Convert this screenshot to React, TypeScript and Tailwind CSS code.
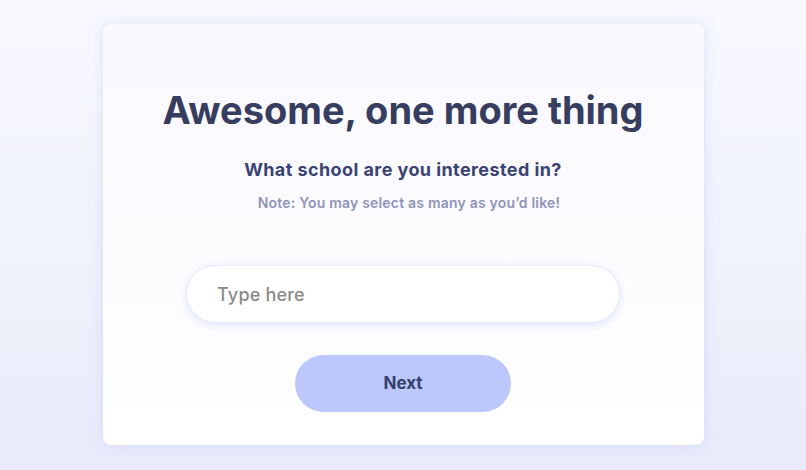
export default function App() {
  return (
    <div className="min-h-[470px] w-full bg-gradient-to-b from-[#f8f9fe] to-[#e9ebfa] pt-6 font-['Inter',sans-serif]">
      <div className="mx-auto flex h-[421px] w-[601px] flex-col items-center rounded-lg bg-gradient-to-b from-[#f8f8fe] to-white shadow-[0_0_14px_rgba(170,180,245,0.35)]">
        <h1 className="mt-[62px] text-[38px] font-bold leading-[48px] text-[#363d5f]">
          Awesome, one more thing
        </h1>
        <h2 className="mt-[24px] text-[18px] font-bold leading-6 tracking-[0.42px] text-[#3a4373]">
          What school are you interested in?
        </h2>
        <p className="mt-[11px] pl-[12px] text-[14px] font-semibold leading-5 tracking-[0.2px] text-[#8f94b8]">
          Note: You may select as many as you’d like!
        </p>
        <input
          type="text"
          placeholder="Type here"
          className="mt-[52px] h-[58px] w-[434px] rounded-full border border-[#e8eafc] bg-white px-[30px] text-[18px] font-medium tracking-[0.2px] text-[#555] shadow-[0_2px_8px_rgba(170,180,245,0.35)] outline-none placeholder:text-[#8a8a8a]"
        />
        <button className="mt-[32px] h-[57px] w-[216px] rounded-full bg-[#bcc8fb] text-[17px] font-bold text-[#363f6b]">
          Next
        </button>
      </div>
    </div>
  );
}
